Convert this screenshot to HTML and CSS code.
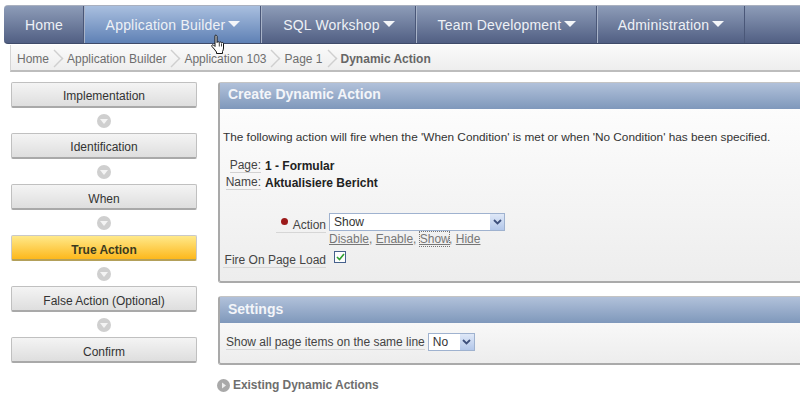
FILE: index.html
```html
<!DOCTYPE html>
<html>
<head>
<meta charset="utf-8">
<title>Create Dynamic Action</title>
<link rel="stylesheet" href="styles.css">
</head>
<body>
<nav class="nav">
  <a class="tab tab-home">Home</a>
  <a class="tab tab-app active">Application Builder<i class="caret"></i></a>
  <a class="tab tab-sql">SQL Workshop<i class="caret"></i></a>
  <a class="tab tab-team">Team Development<i class="caret"></i></a>
  <a class="tab tab-admin">Administration<i class="caret"></i></a>
</nav>
<svg class="cursor" width="18" height="22" viewBox="0 0 18 22"><path d="M5 1.500c1-.8 2 0 2 1v6c.3-1 2-1 2.300 0 .3-.8 1.900-.8 2.200.3.500-.6 2-.4 2 .8v4.400c0 1.500-.5 2.500-1 3.500v2H6.500v-1.500C5 16 3.500 14 2 12.500c-.8-1 .3-2.300 1.500-1.500L5 12.500z" fill="#fff" stroke="#111" stroke-width="1"/><path d="M9.300 9v3.500M11.500 9.500v3M13.500 10.500v2" stroke="#111" stroke-width=".8" fill="none"/></svg>
<div class="crumbs">
  <span>Home</span><i class="sep"></i>
  <span>Application Builder</span><i class="sep"></i>
  <span>Application 103</span><i class="sep"></i>
  <span>Page 1</span><i class="sep"></i>
  <b>Dynamic Action</b>
</div>
<div class="main">
  <aside class="steps">
    <div class="step">Implementation</div>
    <i class="dot"></i>
    <div class="step">Identification</div>
    <i class="dot"></i>
    <div class="step lower">When</div>
    <i class="dot"></i>
    <div class="step lower current">True Action</div>
    <i class="dot"></i>
    <div class="step lower">False Action (Optional)</div>
    <i class="dot"></i>
    <div class="step lower">Confirm</div>
  </aside>
  <section class="content">
    <div class="panel panel-create">
      <h2>Create Dynamic Action</h2>
      <div class="body">
        <p class="intro">The following action will fire when the 'When Condition' is met or when 'No Condition' has been specified.</p>
        <div class="info">
          <span class="ilabel">Page:</span><b>1 - Formular</b>
          <span class="ilabel">Name:</span><b>Aktualisiere Bericht</b>
        </div>
        <div class="field field-action">
          <label class="flabel"><i class="req"></i>Action</label>
          <div>
            <div class="select select-wide">Show<i class="arrow"><svg width="9" height="6" viewBox="0 0 9 6"><path d="M1 1l3.500 3.500L8 1" fill="none" stroke="#3d4f7c" stroke-width="1.800"/></svg></i></div>
            <div class="links"><a>Disable</a>, <a>Enable</a>, <a class="focus">Show</a>, <a>Hide</a></div>
          </div>
        </div>
        <div class="field field-load">
          <label class="flabel">Fire On Page Load</label>
          <span class="check"><svg width="9" height="8" viewBox="0 0 9 8"><path d="M1 4l2.500 2.500L8 1" fill="none" stroke="#2ea02e" stroke-width="1.600"/></svg></span>
        </div>
      </div>
    </div>
    <div class="panel panel-settings">
      <h2>Settings</h2>
      <div class="body settings-body">
        <span class="slabel">Show all page items on the same line</span>
        <div class="select select-small">No<i class="arrow"><svg width="9" height="6" viewBox="0 0 9 6"><path d="M1 1l3.500 3.500L8 1" fill="none" stroke="#3d4f7c" stroke-width="1.800"/></svg></i></div>
      </div>
    </div>
    <div class="existing">
      <svg class="existing-icon" width="13" height="13" viewBox="0 0 13 13"><circle cx="6.500" cy="6.500" r="6.500" fill="#a9a9a9"/><path d="M5 3.500l4 3-4 3z" fill="#eee"/></svg>
      <b>Existing Dynamic Actions</b>
    </div>
  </section>
</div>
</body>
</html>
```
FILE: styles.css
```css
* { box-sizing: border-box; }
html, body { margin: 0; padding: 0; }
body {
  width: 800px;
  height: 410px;
  overflow: hidden;
  background: #fff;
  font-family: "Liberation Sans", Arial, sans-serif;
  font-size: 12px;
  color: #333;
  position: relative;
  padding: 5px 0 0 4px;
}
.nav {
  display: flex;
  height: 39px;
  width: 796px;
  background: linear-gradient(#8d9cb8, #515f83);
  border-top: 1px solid #a9b0bf;
  border-bottom: 1px solid #3f4b69;
  border-radius: 4px 0 0 4px;
}
.tab {
  display: flex;
  align-items: center;
  justify-content: center;
  color: #eef1f6;
  font-size: 14px;
  letter-spacing: .2px;
  height: 37px;
  border-right: 1px solid #a8b3c8;
  padding-top: 1px;
  box-shadow: inset -1px 0 0 #4a5778;
}
.tab-home { width: 81px; border-radius: 4px 0 0 4px; }
.tab-app { width: 177px; }
.tab-sql { width: 155px; }
.tab-team { width: 181px; }
.tab-admin { width: 147px; border-right-color: #4a5778; box-shadow: none; }
.active { background: linear-gradient(#a9bfdf, #5f81b5); }
.caret {
  width: 0;
  height: 0;
  margin: 0 0 2px 3px;
  border-left: 6px solid transparent;
  border-right: 6px solid transparent;
  border-top: 6px solid #f4f6f9;
}
.cursor { position: absolute; left: 210px; top: 34px; }
.crumbs {
  display: flex;
  align-items: center;
  margin: 1px 0 0 6px;
  height: 27px;
  width: 790px;
  padding: 2px 0 0 6px;
  background: linear-gradient(#fafafa, #eeeeee);
  border-left: 1px solid #d5d5d5;
  border-bottom: 2px solid #bdbdbd;
  color: #6e6e6e;
}
.crumbs b { color: #666; }
.sep {
  width: 9px;
  height: 9px;
  margin: 0 8px 0 1px;
  transform: rotate(45deg) scale(1.4);
  border-top: 1px solid #cfcfcf;
  border-right: 1px solid #cfcfcf;
  flex: none;
}
.main {
  display: flex;
  margin-top: 10px;
  margin-left: 7px;
}
.steps {
  width: 186px;
  display: flex;
  flex-direction: column;
  align-items: center;
  flex: none;
}
.step {
  width: 186px;
  height: 26px;
  display: flex;
  align-items: center;
  justify-content: center;
  border: 1px solid #c0c0c0;
  border-bottom: 2px solid #a9a9a9;
  border-radius: 2px;
  background: linear-gradient(#f4f4f4, #dedede);
  color: #333;
  padding-top: 2px;
}
.lower { padding-top: 4px; }
.current {
  background: linear-gradient(#ffe98a, #fdb81c);
  border-color: #c9c9c9;
  border-bottom-color: #b3a05a;
  font-weight: bold;
  color: #3a3a1e;
}
.dot {
  position: relative;
  width: 14px;
  height: 14px;
  margin: 6px 0 5px;
  border-radius: 50%;
  background: #cfcfcf;
}
.dot::after {
  content: "";
  position: absolute;
  left: 3px;
  top: 5px;
  border-left: 4px solid transparent;
  border-right: 4px solid transparent;
  border-top: 5px solid #f4f4f4;
}
.content {
  flex: none;
  width: 582px;
  margin-left: 21px;
}
.panel {
  border: 1px solid #c4c4c4;
  border-left: 2px solid #a9a9a9;
  border-right: 0;
  border-bottom: 2px solid #aaa;
  border-radius: 3px 0 0 3px;
  background: linear-gradient(#fff, #ededed);
}
.panel h2 {
  margin: 0;
  height: 26px;
  padding: 0 0 4px 8px;
  display: flex;
  align-items: center;
  font-size: 14px;
  font-weight: bold;
  color: #f3f5f9;
  background: linear-gradient(#b1c1da, #7f98bb);
}
.panel-settings h2 { padding-bottom: 2px; }
.panel-create { height: 201px; }
.panel-create .body { padding: 21px 0 0 3px; }
.intro { margin: 0 0 12px; line-height: 15px; color: #333; font-size: 11.81px; }
.info {
  display: grid;
  grid-template-columns: 38px auto;
  grid-auto-rows: 17px;
  align-items: center;
  column-gap: 4px;
}
.info b { color: #222; }
.ilabel {
  justify-self: end;
  color: #444;
  border-bottom: 1px solid #d2d2d2;
}
.field { display: flex; }
.field-action { margin-top: 22px; }
.field-load { margin-top: 2px; align-items: flex-start; }
.flabel {
  width: 103px;
  text-align: right;
  border-bottom: 1px solid #d6d6d6;
  color: #444;
  height: 15px;
  line-height: 14px;
  margin-top: 4px;
  white-space: nowrap;
}
.field-action .flabel { width: 50px; margin: 5px 0 0 53px; }
.req {
  display: inline-block;
  width: 7px;
  height: 7px;
  margin: 0 5px 4px 0;
  background: #9c1a1a;
  border-radius: 50%;
}
.select {
  position: relative;
  background: #fff;
  border: 1px solid #9fb2cf;
  height: 18px;
  line-height: 16px;
  padding-left: 4px;
  color: #333;
  font-size: 12px;
}
.select-wide { width: 176px; margin-left: 3px; }
.select-small { width: 47px; margin-left: 3px; }
.arrow {
  position: absolute;
  right: 0;
  top: 0;
  width: 14px;
  height: 16px;
  background: linear-gradient(#dfe8f7, #b3c7ea);
  display: flex;
  align-items: center;
  justify-content: center;
}
.links {
  margin: 1px 0 0 3px;
  height: 15px;
  line-height: 15px;
  color: #777;
}
.links a { text-decoration: underline; color: #777; }
.links .focus { outline: 1px dotted #777; }
.check {
  width: 12px;
  height: 12px;
  margin: 2px 0 0 8px;
  border: 1px solid #46618d;
  background: #fdfdfd;
  display: flex;
  align-items: center;
  justify-content: center;
}
.panel-settings { height: 69px; margin-top: 13px; }
.settings-body {
  display: flex;
  align-items: center;
  padding: 10px 0 0 6px;
}
.slabel { color: #444; border-bottom: 1px solid #d6d6d6; line-height: 14px; }
.existing {
  display: flex;
  align-items: center;
  gap: 3px;
  margin-top: 13px;
  color: #6e6e6e;
  letter-spacing: -.05px;
}
.existing-icon { margin-left: -1px; }
```
